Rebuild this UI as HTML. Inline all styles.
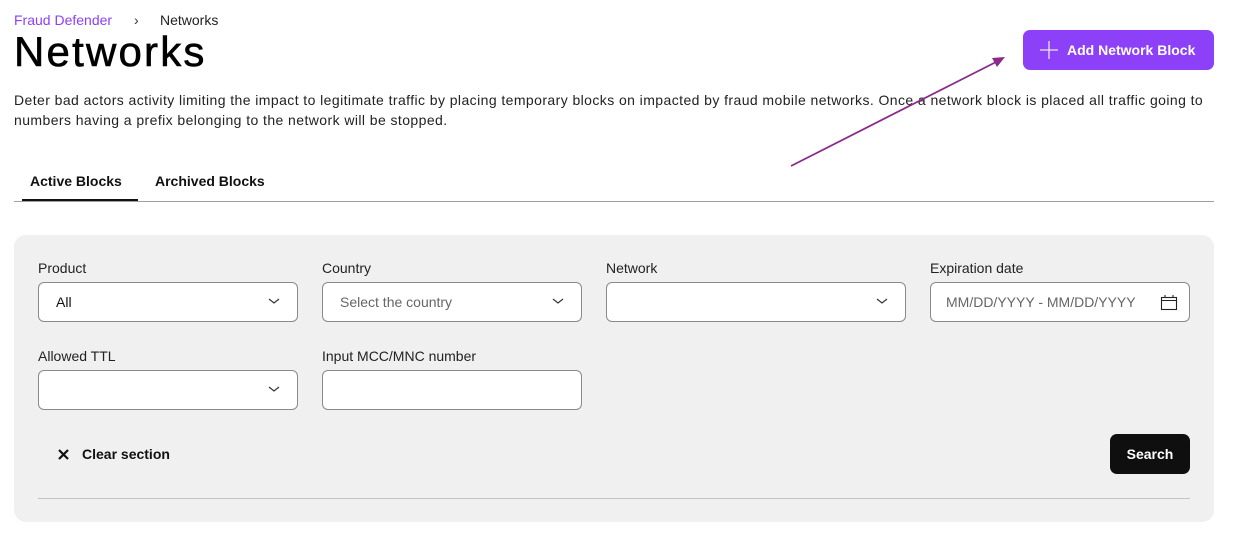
<!DOCTYPE html>
<html><head><meta charset="utf-8"><style>
*{box-sizing:border-box;margin:0;padding:0}
body{width:1238px;height:543px;background:#fff;font-family:"Liberation Sans",sans-serif;color:#111;position:relative;overflow:hidden}
.a{position:absolute}
.lbl{font-size:14px;color:#222}
.fld{position:absolute;height:40px;background:#fff;border:1px solid #8a8a8a;border-radius:6px;font-size:14px;padding:0 17px;line-height:38px}
.chev{position:absolute;right:17px;top:14px}
</style></head><body>
<div class="a" style="left:14px;top:12px;font-size:14px;color:#8c41f9">Fraud Defender</div>
<div class="a" style="left:134px;top:12px;font-size:14px;color:#333">›</div>
<div class="a" style="left:160px;top:12px;font-size:14px;color:#222">Networks</div>
<div class="a" style="left:14px;top:28px;font-size:42px;color:#000;letter-spacing:2.2px;-webkit-text-stroke:0.6px #000">Networks</div>
<div class="a" style="left:14px;top:91px;width:1224px;font-size:14px;line-height:19.5px;color:#222;letter-spacing:0.42px;white-space:nowrap">Deter bad actors activity limiting the impact to legitimate traffic by placing temporary blocks on impacted by fraud mobile networks. Once a network block is placed all traffic going to<br>numbers having a prefix belonging to the network will be stopped.</div>
<div class="a" style="left:1023px;top:30px;width:191px;height:40px;background:#8c41f9;border-radius:7px;color:#fff;font-weight:bold;font-size:14px;line-height:40px;padding-left:44px">Add Network Block</div>
<svg class="a" style="left:1038px;top:39px" width="22" height="22"><path d="M11 2V20M2 11H20" stroke="#fff" stroke-width="1.3" opacity="0.85"/></svg>
<svg class="a" style="left:0;top:0" width="1238" height="543"><line x1="791" y1="166" x2="998" y2="61" stroke="#8b2a8b" stroke-width="1.8"/><path d="M1005 57L992 58L997 67Z" fill="#8b2a8b"/></svg>
<div class="a" style="left:30px;top:173px;font-size:14px;font-weight:bold">Active Blocks</div>
<div class="a" style="left:155px;top:173px;font-size:14px;font-weight:bold">Archived Blocks</div>
<div class="a" style="left:14px;top:201px;width:1200px;height:1px;background:#a0a0a0"></div>
<div class="a" style="left:22px;top:199px;width:116px;height:2px;background:#111"></div>
<div class="a" style="left:14px;top:235px;width:1200px;height:287px;background:#f0f0f0;border-radius:12px"></div>
<div class="a lbl" style="left:38px;top:260px">Product</div>
<div class="a lbl" style="left:322px;top:260px">Country</div>
<div class="a lbl" style="left:606px;top:260px">Network</div>
<div class="a lbl" style="left:930px;top:260px">Expiration date</div>
<div class="fld" style="left:38px;top:282px;width:260px">All<svg class="chev" width="12" height="8"><path d="M1 2L6 6L11 2" fill="none" stroke="#333" stroke-width="1.2"/></svg></div>
<div class="fld" style="left:322px;top:282px;width:260px;color:#666">Select the country<svg class="chev" width="12" height="8"><path d="M1 2L6 6L11 2" fill="none" stroke="#333" stroke-width="1.2"/></svg></div>
<div class="fld" style="left:606px;top:282px;width:300px"><svg class="chev" width="12" height="8"><path d="M1 2L6 6L11 2" fill="none" stroke="#333" stroke-width="1.2"/></svg></div>
<div class="fld" style="left:930px;top:282px;width:260px;color:#666;padding-left:15px;overflow:hidden;white-space:nowrap"><span style="display:inline-block;width:193px;overflow:hidden;vertical-align:top">MM/DD/YYYY - MM/DD/YYYY</span><svg style="position:absolute;right:11px;top:11px" width="18" height="17"><rect x="1.5" y="3.5" width="15" height="12" fill="none" stroke="#222" stroke-width="1.1"/><path d="M1.5 6.5H16.5M5 1V4M13 1V4" stroke="#222" stroke-width="1.1"/></svg></div>
<div class="a lbl" style="left:38px;top:348px">Allowed TTL</div>
<div class="a lbl" style="left:322px;top:348px">Input MCC/MNC number</div>
<div class="fld" style="left:38px;top:370px;width:260px"><svg class="chev" width="12" height="8"><path d="M1 2L6 6L11 2" fill="none" stroke="#333" stroke-width="1.2"/></svg></div>
<div class="fld" style="left:322px;top:370px;width:260px"></div>
<svg class="a" style="left:57px;top:448px" width="13" height="13"><path d="M2 2L11 11M11 2L2 11" stroke="#111" stroke-width="2.2"/></svg>
<div class="a" style="left:82px;top:446px;font-size:14px;font-weight:bold">Clear section</div>
<div class="a" style="left:1110px;top:434px;width:80px;height:40px;background:#0f0f0f;border-radius:7px;color:#fff;font-weight:bold;font-size:14px;line-height:40px;text-align:center">Search</div>
<div class="a" style="left:38px;top:498px;width:1152px;height:1px;background:#c4c4c4"></div>
</body></html>
